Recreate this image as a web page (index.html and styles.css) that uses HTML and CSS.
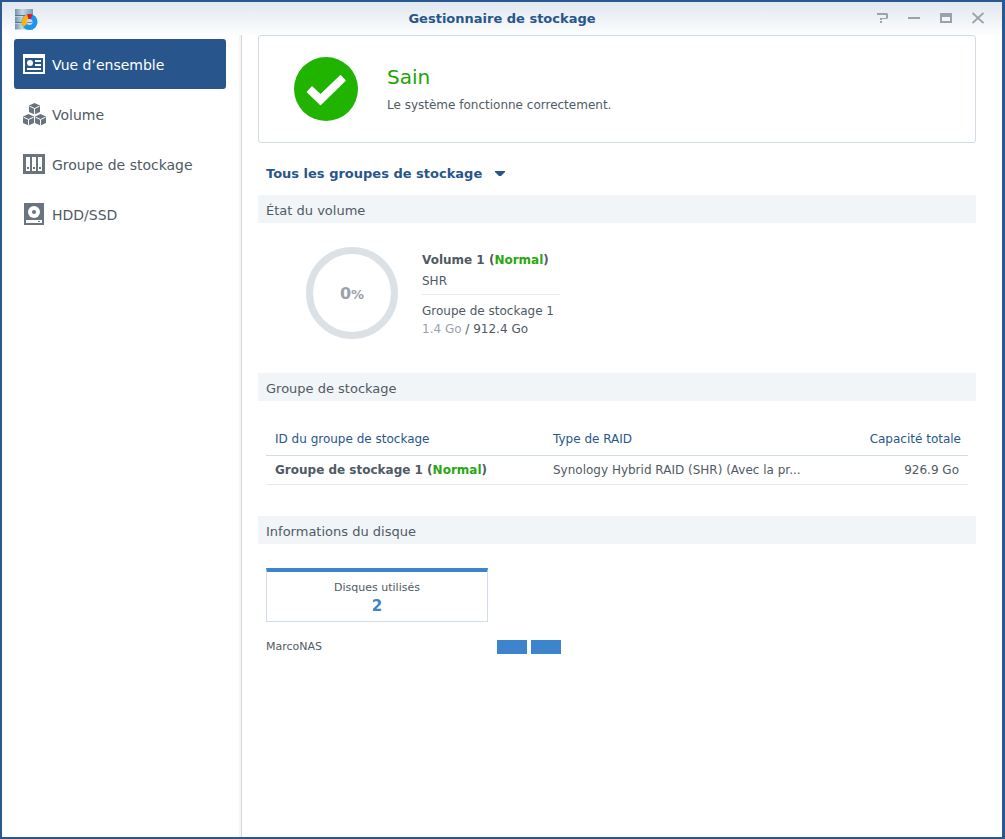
FILE: index.html
```html
<!DOCTYPE html>
<html lang="fr">
<head>
<meta charset="utf-8">
<title>Gestionnaire de stockage</title>
<link rel="stylesheet" href="styles.css">
</head>
<body>
<div class="window">
  <header class="titlebar">
    <svg class="app-icon" viewBox="0 0 24 24" aria-hidden="true">
      <defs>
        <linearGradient id="metal" x1="0" x2="1" y1="0" y2="0">
          <stop offset="0" stop-color="#7592a8"/>
          <stop offset=".4" stop-color="#c3d8e6"/>
          <stop offset="1" stop-color="#7d9ab0"/>
        </linearGradient>
      </defs>
      <path d="M1 2h18v20.500H1z" fill="url(#metal)"/>
      <path d="M1 8.500h18M1 15.500h18" stroke="#5b7588" stroke-width="1"/>
      <path d="M1 9.500h18M1 16.500h18" stroke="#d3e3ee" stroke-width="1" opacity=".6"/>
      <circle cx="15.500" cy="15" r="8" fill="#1c94f2"/>
      <path d="M15.500 15 9.500 20A7.800 7.800 0 0 1 13.300 7.500z" fill="#f8b40c"/>
      <path d="M15.500 15 13 7.400A8 8 0 0 1 18.500 7.600z" fill="#e5162c"/>
      <circle cx="15.500" cy="15" r="3" fill="#cbd9e4"/>
      <path d="M13 15.500h5" stroke="#6f8ca2" stroke-width="1"/>
    </svg>
    <h1 class="title">Gestionnaire de stockage</h1>
    <div class="controls">
      <button class="control" type="button" aria-label="Aide"><svg viewBox="0 0 12 12"><path d="M1 1h10l1 1v4l-1 1H6v1H4V6h6V3H1zM4 9h2v2H4z" fill="currentColor"/></svg></button>
      <button class="control" type="button" aria-label="Réduire"><svg viewBox="0 0 12 12"><path d="M0 5h12v2H0z" fill="currentColor"/></svg></button>
      <button class="control" type="button" aria-label="Agrandir"><svg viewBox="0 0 12 12"><path d="M0 1h12v10H0z" fill="currentColor"/><path d="M2 5h8v4H2z" fill="#f3f6fa"/></svg></button>
      <button class="control" type="button" aria-label="Fermer"><svg viewBox="0 0 12 12"><path d="M.5 1 11.500 11M11.500 1 .5 11" fill="none" stroke="currentColor" stroke-width="1.800"/></svg></button>
    </div>
  </header>

  <div class="body">
    <nav class="sidebar">
      <a class="nav-item active" href="#overview" aria-current="page">
        <svg viewBox="0 0 24 24" fill="currentColor"><path fill-rule="evenodd" d="M1 2h22v20H1zM3 6v14h18V6z"/><circle cx="8" cy="11" r="3"/><path d="M13 8h6v2h-6zM13 12h6v2h-6zM5 16h14v2H5z"/></svg>
        <span class="nav-label">Vue d’ensemble</span>
      </a>
      <a class="nav-item" href="#volume">
        <svg viewBox="0 0 24 24">
          <g id="cube"><path d="M12.500 1 18 3.500V10l-5.500 2.500L7 10V3.500z" fill="#69747f"/><path d="m7.500 4.200 5 2.300 5-2.300M12.500 6.500v6" fill="none" stroke="#fff" stroke-width="1"/></g>
          <use href="#cube" x="-6" y="11"/><use href="#cube" x="6" y="11"/>
        </svg>
        <span class="nav-label">Volume</span>
      </a>
      <a class="nav-item" href="#pool">
        <svg viewBox="0 0 24 24" fill="#69747f"><path d="M1 2h22v20H1z"/><path d="M4 5h4v14H4zM10 5h4v14h-4zM16 5h4v14h-4z" fill="#fff"/><path d="M5 15h2v2H5zM11 15h2v2h-2zM17 15h2v2h-2z"/></svg>
        <span class="nav-label">Groupe de stockage</span>
      </a>
      <a class="nav-item" href="#disk">
        <svg viewBox="0 0 24 24" fill="#69747f"><path d="M2 1h20v22H2z"/><circle cx="12" cy="10" r="6" fill="#fff"/><circle cx="12" cy="10" r="2"/><path d="M4 18h16v3H4z" fill="#fff"/><path d="M16 19h2v1h-2z"/></svg>
        <span class="nav-label">HDD/SSD</span>
      </a>
    </nav>

    <main class="main" id="overview">
      <section class="status">
        <svg class="status-icon" viewBox="0 0 64 64" aria-hidden="true"><circle cx="32" cy="32" r="32" fill="#20b400"/><path d="M13 34.500 17.500 29.500Q18 29 18.600 29.500L26.500 37 46 18.200Q46.500 17.700 47 18.200L51.500 23Q52 23.500 51.500 24L27 48Q26.500 48.500 26 48L13 35.500Q12.500 35 13 34.500z" fill="#fff"/></svg>
        <div class="status-body">
          <h2 class="status-title">Sain</h2>
          <p class="status-text">Le système fonctionne correctement.</p>
        </div>
      </section>

      <div class="filter">
        <select class="filter-select" aria-label="Groupe de stockage affiché">
          <option>Tous les groupes de stockage</option>
        </select>
        <svg class="filter-arrow" viewBox="0 0 10 6" aria-hidden="true"><path d="M0 0h10v1L6 5H4L0 1z" fill="#28568c"/></svg>
      </div>

      <section>
        <h3 class="section-title">État du volume</h3>
        <div class="volume">
          <div class="gauge"><span class="gauge-value">0<small>%</small></span></div>
          <div class="volume-info">
            <p class="volume-name">Volume 1 (<span class="normal">Normal</span>)</p>
            <p class="volume-type">SHR</p>
            <p class="volume-line">Groupe de stockage 1</p>
            <p class="volume-line"><span class="used">1.4 Go</span> / 912.4 Go</p>
          </div>
        </div>
      </section>

      <section>
        <h3 class="section-title">Groupe de stockage</h3>
        <div class="pool">
          <table class="pool-table">
            <thead>
              <tr><th class="col-id" scope="col">ID du groupe de stockage</th><th class="col-type" scope="col">Type de RAID</th><th class="col-size" scope="col">Capacité totale</th></tr>
            </thead>
            <tbody>
              <tr><td class="pool-name">Groupe de stockage 1 (<span class="normal">Normal</span>)</td><td>Synology Hybrid RAID (SHR) (Avec la pr...</td><td class="col-size">926.9 Go</td></tr>
            </tbody>
          </table>
        </div>
      </section>

      <section>
        <h3 class="section-title">Informations du disque</h3>
        <div class="disks">
          <div class="disk-card">
            <span>Disques utilisés</span>
            <strong class="disk-count">2</strong>
          </div>
          <div class="disk-row">
            <span class="disk-host">MarcoNAS</span>
            <span class="slot"></span>
            <span class="slot"></span>
          </div>
        </div>
      </section>
    </main>
  </div>
</div>
</body>
</html>
```

FILE: styles.css
```css
* {
  box-sizing: border-box;
}

body {
  margin: 0;
  color: #505a64;
  font: 12px/18px Verdana, "DejaVu Sans", sans-serif;
}

h1, h2, h3, p {
  margin: 0;
}

.window {
  display: flex;
  flex-direction: column;
  min-height: 100vh;
  border: 2px solid #2b5890;
  border-right-width: 3px;
  background: #fff;
}

.titlebar {
  display: grid;
  grid-template-columns: 1fr auto 1fr;
  align-items: center;
  height: 33px;
  padding: 0 18px 0 12px;
  background: linear-gradient(#e0e7ef, #fdfefe);
}

.app-icon {
  width: 24px;
  height: 24px;
}

.title {
  padding-left: 6px;
  color: #28568c;
  font-size: 13px;
  font-weight: bold;
}

.controls {
  display: flex;
  justify-content: flex-end;
  gap: 20px;
  padding-bottom: 1px;
}

.control {
  display: flex;
  width: 12px;
  padding: 0;
  border: 0;
  background: none;
  color: #9ba2aa;
}

.control svg {
  width: 12px;
  height: 12px;
}

.body {
  display: flex;
  flex: 1;
}

.sidebar {
  width: 240px;
  flex: none;
  padding: 4px 15px 0 12px;
  border-right: 1px solid #d8d8d8;
  box-shadow: inset -2px 0 1px #f5f5f5;
}

.nav-item {
  display: flex;
  align-items: center;
  gap: 6px;
  height: 50px;
  padding: 0 8px;
  border-radius: 3px;
  color: #505a64;
  font-size: 14px;
  text-decoration: none;
}

.nav-item.active {
  background: #28568c;
  color: #fff;
}

.nav-item svg {
  width: 24px;
  height: 24px;
  flex: none;
}

.nav-label {
  padding-top: 2px;
}

.main {
  flex: 1;
  min-width: 0;
  padding: 0 26px 24px 16px;
}

.status {
  display: flex;
  align-items: center;
  gap: 29px;
  height: 108px;
  padding: 0 35px;
  border: 1px solid #d0dce6;
  border-radius: 3px;
}

.status-icon {
  width: 64px;
  height: 64px;
}

.status-body {
  padding-top: 3px;
}

.status-title {
  color: #1ea500;
  font-size: 20px;
  font-weight: normal;
  line-height: 28px;
}

.status-text {
  line-height: 28px;
}

.filter {
  display: flex;
  align-items: center;
  gap: 12px;
  height: 52px;
  padding: 10px 8px 0;
}

.filter-select {
  appearance: none;
  padding: 0;
  border: 0;
  background: none;
  color: #28568c;
  font: bold 13px/20px Verdana, "DejaVu Sans", sans-serif;
}

.filter-arrow {
  width: 10px;
  height: 6px;
}

.section-title {
  padding: 4px 8px 0;
  background: #f1f5f8;
  font-size: 13px;
  font-weight: normal;
  line-height: 24px;
}

.volume {
  display: flex;
  gap: 24px;
  padding: 24px 48px 34px;
}

.gauge {
  display: flex;
  align-items: center;
  justify-content: center;
  width: 92px;
  height: 92px;
  border: 7px solid #dce1e5;
  border-radius: 50%;
}

.gauge-value {
  padding-top: 2px;
  color: #98a1ab;
  font-size: 16px;
  font-weight: bold;
}

.gauge-value small {
  font-size: 13px;
}

.volume-info {
  width: 138px;
  white-space: nowrap;
}

.volume-name {
  padding-top: 1px;
  font-weight: bold;
  line-height: 24px;
}

.volume-type {
  margin-bottom: 7px;
  padding-bottom: 4px;
  border-bottom: 1px solid #e6eaed;
}

.normal {
  color: #28a80f;
}

.used {
  color: #98a1ab;
}

.pool {
  padding: 21px 8px 31px;
}

.pool-table {
  width: 100%;
  border-collapse: separate;
  border-spacing: 0;
  table-layout: fixed;
}

.pool-table th,
.pool-table td {
  padding: 0 9px;
  text-align: left;
  white-space: nowrap;
}

.pool-table th {
  height: 34px;
  border-bottom: 1px solid #d0dce6;
  color: #28568c;
  font-weight: normal;
}

.pool-table td {
  height: 29px;
  border-bottom: 1px solid #e6eaed;
}

.pool-table .col-id {
  width: 278px;
}

.pool-table .col-type {
  width: 282px;
}

.pool-table .col-size {
  text-align: right;
}

.pool-table th.col-size {
  padding-right: 7px;
}

.pool-table .pool-name {
  font-weight: bold;
}

.disks {
  padding: 24px 8px;
  font-size: 11px;
}

.disk-card {
  display: flex;
  flex-direction: column;
  align-items: center;
  width: 222px;
  padding: 7px 0 6px;
  border: 1px solid #d0dce6;
  border-top: 4px solid #3c84cc;
}

.disk-count {
  color: #3c84cc;
  font-size: 15px;
}

.disk-row {
  display: flex;
  align-items: center;
  gap: 4px;
  padding-top: 16px;
}

.disk-host {
  width: 227px;
}

.slot {
  width: 30px;
  height: 14px;
  background: #3c84cc;
}
```
